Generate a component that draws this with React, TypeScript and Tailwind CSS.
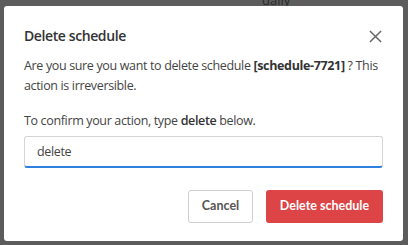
import { useState } from 'react';

export default function App() {
  const [value, setValue] = useState('delete');

  return (
    <div className="relative h-[245px] w-[408px] overflow-hidden bg-[#5c5c5c] font-['Open_Sans',sans-serif]">
      {/* Page behind the overlay */}
      <div className="absolute left-[262px] top-[-9px] text-[13px] text-[#2a2a2a]">daily</div>

      {/* Dialog */}
      <div className="absolute left-[4px] top-[6px] flex h-[235px] w-[399px] flex-col rounded-[3px] bg-white px-5">
        <div className="flex items-center justify-between pt-[19px]">
          <h2 className="text-[14px] font-semibold leading-[22px] tracking-[-0.4px] text-[#333]">Delete schedule</h2>
          <button className="mr-[1px] text-[#666]" aria-label="Close">
            <svg width="13" height="13" viewBox="0 0 14 14" fill="none" stroke="currentColor" strokeWidth="1.6">
              <path d="M1 1l12 12M13 1L1 13" />
            </svg>
          </button>
        </div>

        <p className="mt-[9px] text-[12.5px] leading-[20px] tracking-[-0.35px] text-[#444]">
          Are you sure you want to delete schedule <b className="font-bold text-[#333]">[schedule-7721]</b> ? This action is irreversible.
        </p>

        <p className="mt-[15px] text-[12.5px] leading-[20px] tracking-[-0.35px] text-[#444]">
          To confirm your action, type <b className="font-semibold text-[#333]">delete</b> below.
        </p>

        <input
          value={value}
          onChange={(e) => setValue(e.target.value)}
          className="mt-[5px] h-[32px] w-[359px] rounded-[3px] border border-[#d4d4d4] border-b-2 border-b-[#2f7fe0] px-3 text-[12.5px] tracking-[-0.35px] text-[#444] outline-none"
        />

        <div className="mt-[22px] flex justify-end gap-[13px] font-['Lato',sans-serif]">
          <button className="h-[33px] w-[65px] rounded-[3px] border border-[#cfcfcf] bg-white text-[12.5px] font-bold text-[#555]">
            Cancel
          </button>
          <button className="h-[33px] w-[117px] rounded-[3px] bg-[#dc4446] text-[12.5px] font-bold text-white">
            Delete schedule
          </button>
        </div>
      </div>
    </div>
  );
}
